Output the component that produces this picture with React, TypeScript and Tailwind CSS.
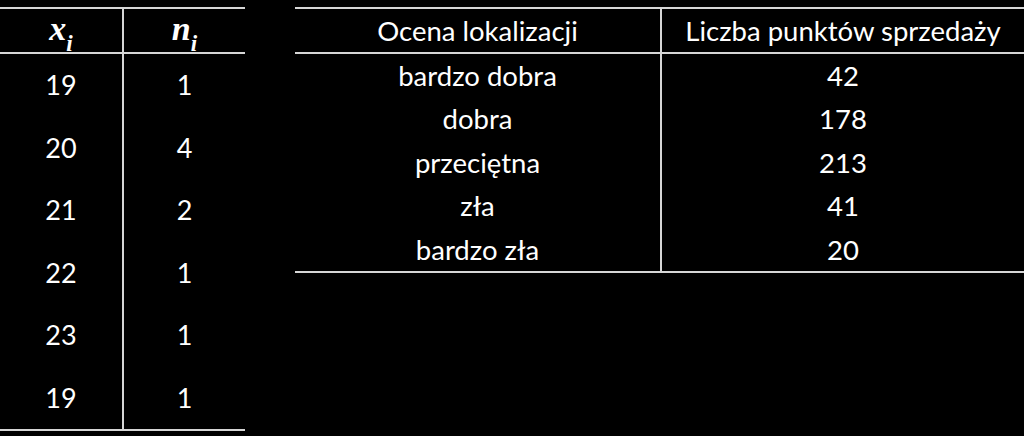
const values = [
  { x: 19, n: 1 },
  { x: 20, n: 4 },
  { x: 21, n: 2 },
  { x: 22, n: 1 },
  { x: 23, n: 1 },
  { x: 19, n: 1 },
];

const ratings = [
  { label: 'bardzo dobra', count: 42 },
  { label: 'dobra', count: 178 },
  { label: 'przeciętna', count: 213 },
  { label: 'zła', count: 41 },
  { label: 'bardzo zła', count: 20 },
];

const MathVar = ({ base }: { base: string }) => (
  <span className="font-['Liberation_Serif',serif] font-bold italic text-[34px] leading-none text-white">
    {base}
    <sub className="text-[23px] align-[-0.25em]">i</sub>
  </span>
);

export default function App() {
  return (
    <div className="w-[1024px] h-[436px] bg-black text-white font-['Lato',sans-serif] flex items-start pt-[7px] overflow-hidden">
      {/* frequency table */}
      <div className="w-[245px] border-y-2 border-[#d6d6d6] flex flex-col">
        <div className="flex h-[45px] border-b-2 border-[#d6d6d6]">
          <div className="w-[124px] border-r-2 border-[#d6d6d6] flex items-center justify-center pb-[4px]">
            <MathVar base="x" />
          </div>
          <div className="flex-1 flex items-center justify-center pb-[4px]">
            <MathVar base="n" />
          </div>
        </div>
        {values.map((row, i) => (
          <div key={i} className="flex h-[62.5px] text-[27px]">
            <div className="w-[124px] border-r-2 border-[#d6d6d6] flex items-center justify-center">{row.x}</div>
            <div className="flex-1 flex items-center justify-center">{row.n}</div>
          </div>
        ))}
      </div>

      {/* ratings table */}
      <div className="ml-[50px] w-[729px] border-y-2 border-[#d6d6d6] flex flex-col text-[27.5px]">
        <div className="flex h-[45px] border-b-2 border-[#d6d6d6]">
          <div className="w-[367px] border-r-2 border-[#d6d6d6] flex items-center justify-center">Ocena lokalizacji</div>
          <div className="flex-1 flex items-center justify-center">Liczba punktów sprzedaży</div>
        </div>
        {ratings.map((r) => (
          <div key={r.label} className="flex h-[43.4px]">
            <div className="w-[367px] border-r-2 border-[#d6d6d6] flex items-center justify-center">{r.label}</div>
            <div className="flex-1 flex items-center justify-center">{r.count}</div>
          </div>
        ))}
      </div>
    </div>
  );
}
